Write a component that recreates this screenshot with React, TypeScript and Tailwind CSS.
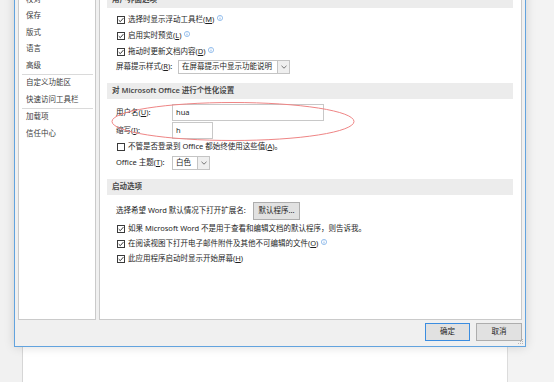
import React from "react";

function Check({ checked = true }: { checked?: boolean }) {
  return (
    <span className="w-[8px] h-[8px] border border-[#3a3a3a] bg-white flex items-center justify-center shrink-0">
      {checked && (
        <svg width="6" height="6" viewBox="0 0 6 6">
          <path d="M0.7 3.1 L2.3 4.7 L5.4 1.1" stroke="#222" strokeWidth="0.9" fill="none" />
        </svg>
      )}
    </span>
  );
}

function Info() {
  return (
    <svg width="6" height="6" viewBox="0 0 6 6" className="ml-[3px] -translate-y-[2px] shrink-0">
      <circle cx="3" cy="3" r="2.6" stroke="#5b9ae0" strokeWidth="0.6" fill="none" />
      <path d="M3 2.6V4.6" stroke="#5b9ae0" strokeWidth="0.7" />
      <circle cx="3" cy="1.6" r="0.4" fill="#5b9ae0" />
    </svg>
  );
}

function Chevron() {
  return (
    <svg width="6" height="4" viewBox="0 0 6 4">
      <path d="M0.5 0.8 L3 3.2 L5.5 0.8" stroke="#555" strokeWidth="0.8" fill="none" />
    </svg>
  );
}

function Key({ k }: { k: string }) {
  return (
    <>
      (<span className="underline">{k}</span>)
    </>
  );
}

function Header({ children }: { children: React.ReactNode }) {
  return (
    <div className="ml-[7px] mr-[8px] h-[16px] bg-[#ececec] pl-[5px] flex items-center text-[#4a4a4a] font-semibold">
      {children}
    </div>
  );
}

function CheckRow({
  children,
  h,
  info,
  checked = true,
}: {
  children: React.ReactNode;
  h: string;
  info?: boolean;
  checked?: boolean;
}) {
  return (
    <div className={`${h} pl-[17px] flex items-center`}>
      <Check checked={checked} />
      <span className="ml-[3px] whitespace-nowrap">{children}</span>
      {info && <Info />}
    </div>
  );
}

function Select({ w, text }: { w: string; text: string }) {
  return (
    <div className={`${w} h-[14px] border border-[#c4c4c4] bg-white flex items-stretch`}>
      <div className="flex-1 pl-[3px] flex items-center whitespace-nowrap overflow-hidden">{text}</div>
      <div className="w-[12px] border-l border-[#c4c4c4] bg-[#efefef] flex items-center justify-center">
        <Chevron />
      </div>
    </div>
  );
}

const navTop = ["校对", "保存", "版式", "语言", "高级"];

export default function App() {
  return (
    <div className="relative w-[554px] h-[382px] overflow-hidden bg-[#f3f3f3] font-['Noto_Sans','Noto_Sans_CJK_SC',sans-serif] text-[7.5px] leading-none text-[#1e1e1e]">
      {/* background document window */}
      <div className="flex h-full">
        <div className="w-[23px] bg-[#f1f1f1] border-r border-[#d6d6d6]" />
        <div className="w-[485px] bg-white border-r border-[#dcdcdc]" />
        <div className="flex-1 bg-[#f3f3f3]" />
      </div>

      {/* dialog */}
      <div className="absolute left-[14px] top-[-60px] w-[512px] h-[407px] border border-[#62a3de] bg-[#f0f0f0] flex flex-col shadow-[0_0_10px_rgba(0,0,0,0.14)]">
        <div className="flex-1 min-h-0 flex gap-[3px] px-[3px] pt-[3px]">
          {/* nav */}
          <div className="w-[78px] bg-white border border-[#cacaca] pt-[46px] text-[#3c3c3c]">
            {navTop.map((t) => (
              <div key={t} className="h-[16.5px] pl-[7px] flex items-center">
                {t}
              </div>
            ))}
            <div className="ml-[3px] mr-[2px] h-px bg-[#dadada]" />
            <div className="h-[16.5px] pl-[7px] flex items-center">自定义功能区</div>
            <div className="h-[16.5px] pl-[7px] flex items-center">快速访问工具栏</div>
            <div className="ml-[3px] mr-[2px] h-px bg-[#dadada]" />
            <div className="h-[16.5px] pl-[7px] flex items-center">加载项</div>
            <div className="h-[16.5px] pl-[7px] flex items-center">信任中心</div>
          </div>

          {/* content */}
          <div className="flex-1 bg-white border border-[#cacaca] overflow-hidden pt-[47px]">
            <Header>用户界面选项</Header>
            <div className="mt-[4px]">
              <CheckRow h="h-[16px]" info>
                选择时显示浮动工具栏<Key k="M" />
              </CheckRow>
              <CheckRow h="h-[16px]" info>
                启用实时预览<Key k="L" />
              </CheckRow>
              <CheckRow h="h-[16px]" info>
                拖动时更新文档内容<Key k="D" />
              </CheckRow>
              <div className="h-[14px] pl-[16px] flex items-center">
                <span className="w-[62px] whitespace-nowrap">
                  屏幕提示样式<Key k="R" />:
                </span>
                <Select w="w-[112px]" text="在屏幕提示中显示功能说明" />
              </div>
            </div>

            <div className="mt-[9px]">
              <Header>对 Microsoft Office 进行个性化设置</Header>
            </div>
            <div className="mt-[5px] flex flex-col gap-[1px]">
              <div className="h-[17px] pl-[16px] flex items-center">
                <span className="w-[56px] whitespace-nowrap">
                  用户名<Key k="U" />:
                </span>
                <div className="w-[152px] h-[17px] border border-[#c8c8c8] bg-white pl-[3px] flex items-center">hua</div>
              </div>
              <div className="h-[17px] pl-[16px] flex items-center">
                <span className="w-[56px] whitespace-nowrap">
                  缩写<Key k="I" />:
                </span>
                <div className="w-[41px] h-[17px] border border-[#c8c8c8] bg-white pl-[3px] flex items-center">h</div>
              </div>
            </div>
            <CheckRow h="h-[16px]" checked={false}>
              不管是否登录到 Office 都始终使用这些值<Key k="A" />。
            </CheckRow>
            <div className="h-[16px] pl-[16px] flex items-center">
              <span className="w-[56px] whitespace-nowrap">
                Office 主题<Key k="T" />:
              </span>
              <Select w="w-[38px]" text="白色" />
            </div>

            <div className="mt-[8px]">
              <Header>启动选项</Header>
            </div>
            <div className="mt-[7px] h-[18px] pl-[16px] flex items-center">
              <span className="w-[137px] whitespace-nowrap">选择希望 Word 默认情况下打开扩展名:</span>
              <div className="w-[47px] h-[18px] border border-[#adadad] bg-[#e1e1e1] flex items-center justify-center">
                默认程序...
              </div>
            </div>
            <div className="mt-[1px]">
              <CheckRow h="h-[15px]">如果 Microsoft Word 不是用于查看和编辑文档的默认程序，则告诉我。</CheckRow>
              <CheckRow h="h-[15px]" info>
                在阅读视图下打开电子邮件附件及其他不可编辑的文件<Key k="O" />
              </CheckRow>
              <CheckRow h="h-[15px]">
                此应用程序启动时显示开始屏幕<Key k="H" />
              </CheckRow>
            </div>
          </div>
        </div>

        {/* buttons */}
        <div className="h-[26px] shrink-0 flex justify-end gap-[6px] px-[3px] pt-[3px]">
          <div className="w-[45px] h-[18px] border border-[#3b8de0] bg-[#e1e1e1] flex items-center justify-center">确定</div>
          <div className="w-[46px] h-[18px] border border-[#adadad] bg-[#e1e1e1] flex items-center justify-center">取消</div>
        </div>

        {/* resize grip */}
        <svg width="6" height="6" viewBox="0 0 6 6" className="absolute right-[1px] bottom-[1px]">
          <rect x="4" y="0" width="1" height="1" fill="#b5b5b5" />
          <rect x="2" y="2" width="1" height="1" fill="#b5b5b5" />
          <rect x="4" y="2" width="1" height="1" fill="#b5b5b5" />
          <rect x="0" y="4" width="1" height="1" fill="#b5b5b5" />
          <rect x="2" y="4" width="1" height="1" fill="#b5b5b5" />
          <rect x="4" y="4" width="1" height="1" fill="#b5b5b5" />
        </svg>
      </div>

      {/* red annotation ellipse */}
      <svg
        width="554"
        height="382"
        viewBox="0 0 554 382"
        className="absolute left-0 top-0 pointer-events-none"
      >
        <ellipse cx="233" cy="121.5" rx="121" ry="19" stroke="#ef8585" strokeWidth="1" fill="none" />
      </svg>
    </div>
  );
}
